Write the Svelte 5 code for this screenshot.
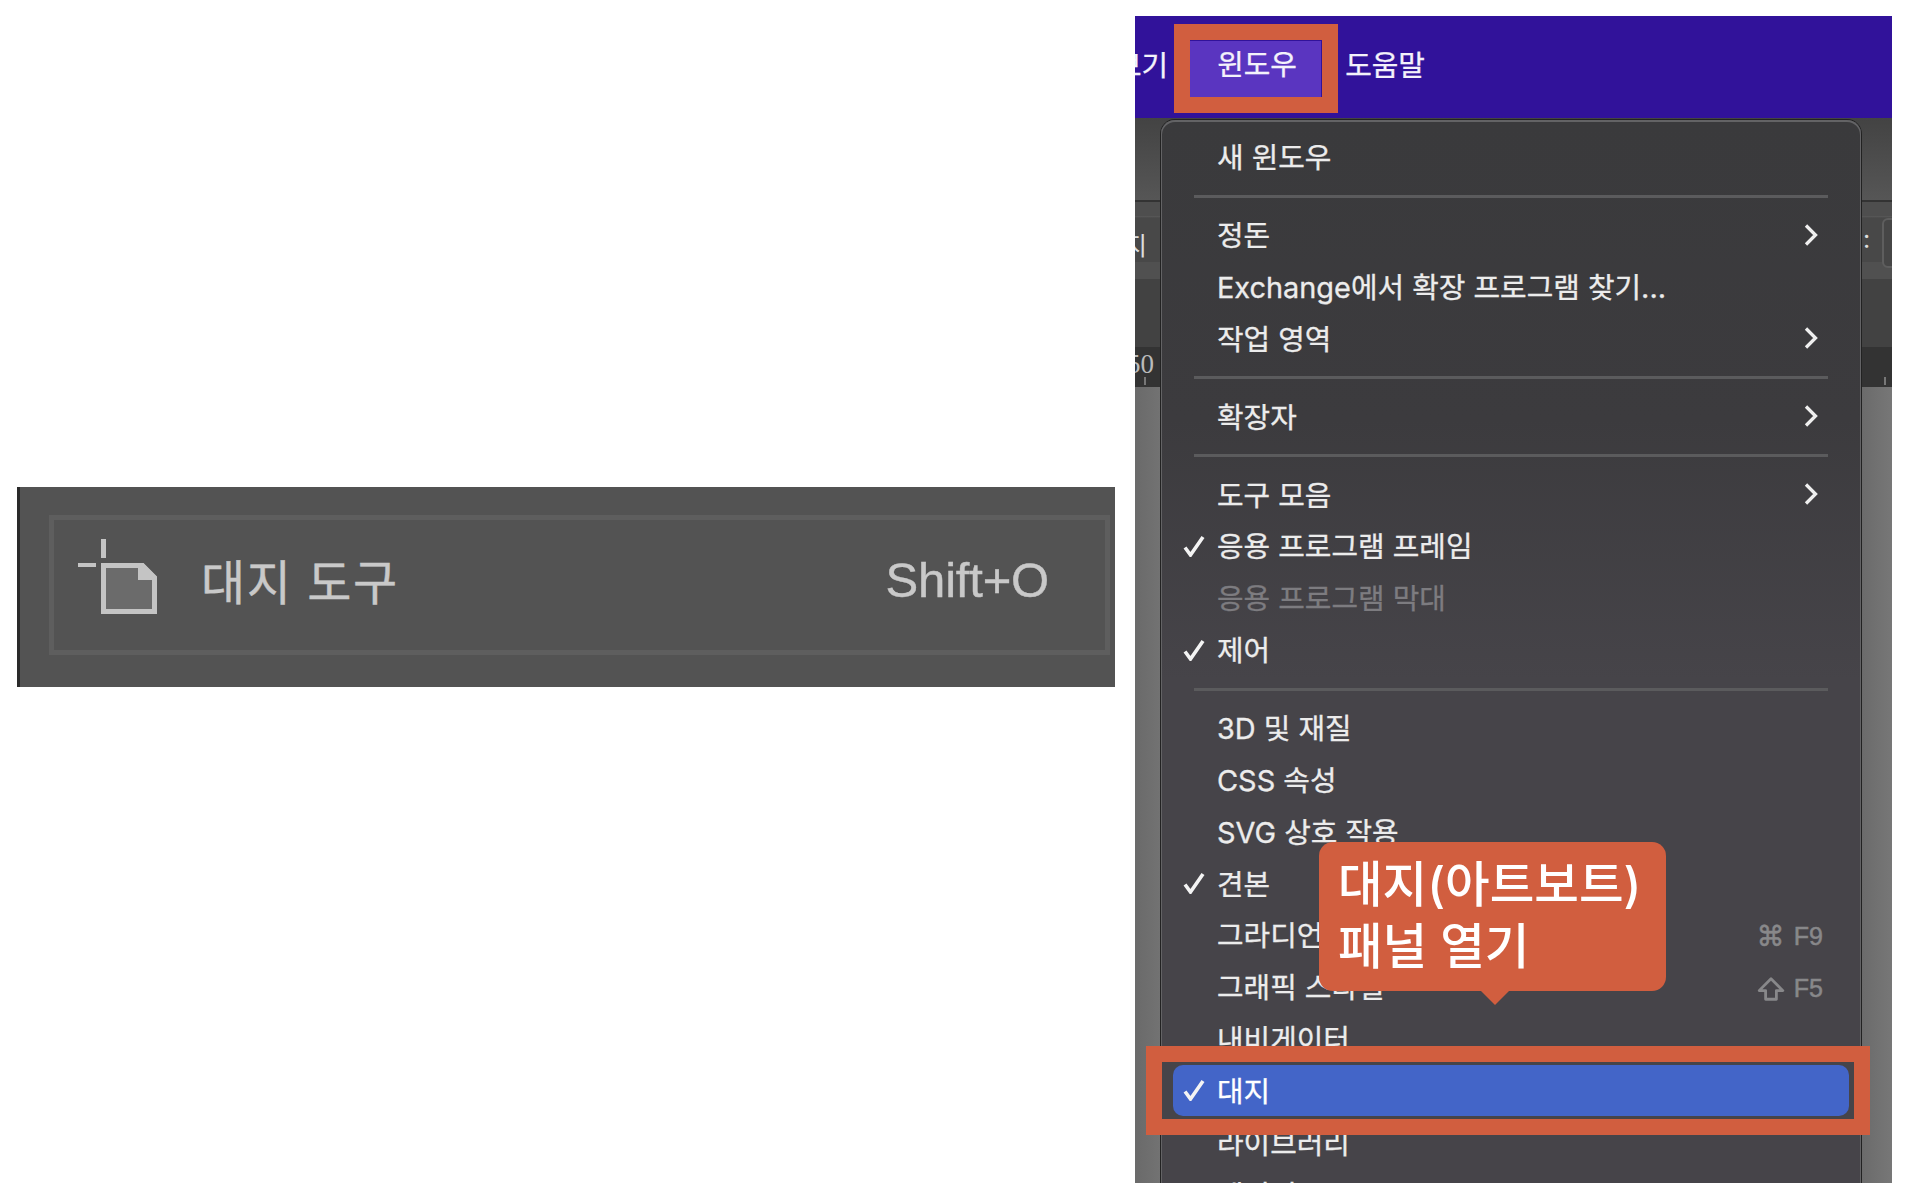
<script>
  const menu = [
    { label: "새 윈도우" },
    { sep: true },
    { label: "정돈", sub: true },
    { label: "Exchange에서 확장 프로그램 찾기..." },
    { label: "작업 영역", sub: true },
    { sep: true },
    { label: "확장자", sub: true },
    { sep: true },
    { label: "도구 모음", sub: true },
    { label: "응용 프로그램 프레임", checked: true },
    { label: "응용 프로그램 막대", disabled: true },
    { label: "제어", checked: true },
    { sep: true },
    { label: "3D 및 재질" },
    { label: "CSS 속성" },
    { label: "SVG 상호 작용" },
    { label: "견본", checked: true },
    { label: "그라디언트", key: "F9", mod: "cmd" },
    { label: "그래픽 스타일", key: "F5", mod: "shift" },
    { label: "내비게이터" },
    { label: "대지", checked: true, active: true },
    { label: "라이브러리" },
    { label: "레이어" },
  ];
</script>

<div class="page">
  <section class="tool-panel">
    <div class="tool-row">
      <svg class="tool-icon" width="80" height="76" viewBox="0 0 80 76">
        <rect x="23" y="0" width="5" height="19" fill="#c4c4c4" />
        <rect x="0" y="24" width="18" height="4" fill="#c4c4c4" />
        <path d="M25.5 26.5H64.5L76.5 38.5V72.5H25.5Z" fill="#6b6b6b" stroke="#c4c4c4" stroke-width="5" />
        <path d="M60 24H65L79 38V41H60Z" fill="#c4c4c4" />
      </svg>
      <span class="tool-name">대지 도구</span>
      <span class="tool-key">Shift+O</span>
    </div>
  </section>

  <section class="app">
    <nav class="menubar">
      <span class="top-item clipped">보기</span>
      <span class="top-item open">윈도우</span>
      <span class="top-item">도움말</span>
    </nav>

    <div class="workspace">
      <div class="band head"></div>
      <div class="band options">
        <span class="opt-left">지</span>
        <span class="opt-colon">:</span>
        <span class="opt-field"></span>
      </div>
      <div class="band doc"></div>
      <div class="band ruler">
        <span class="ruler-num">50</span>
        <i class="tick left"></i>
        <i class="tick right"></i>
      </div>
      <div class="band canvas"></div>
    </div>

    <div class="menu">
      {#each menu as item}
        {#if item.sep}
          <div class="sep"></div>
        {:else}
          <div class="row" class:active={item.active} class:disabled={item.disabled}>
            <span class="check">
              {#if item.checked}
                <svg width="22" height="22" viewBox="0 0 22 22">
                  <path d="M2 12.5L7.5 20L20 2" fill="none" stroke="#f4f4f4" stroke-width="3.6" />
                </svg>
              {/if}
            </span>
            <span class="label">{item.label}</span>
            {#if item.sub}
              <svg class="chevron" width="14" height="22" viewBox="0 0 14 22">
                <path d="M2 1.5L11.5 11L2 20.5" fill="none" stroke="#efefef" stroke-width="3.3" />
              </svg>
            {/if}
            {#if item.key}
              <span class="shortcut">
                {#if item.mod === "cmd"}
                  <span class="cmd">⌘</span>
                {:else}
                  <svg width="28" height="24" viewBox="0 0 26 22">
                    <path d="M13 1.5L24 12.5H18V20.5H8V12.5H2Z" fill="none" stroke="#88888a" stroke-width="2.6" stroke-linejoin="round" />
                  </svg>
                {/if}
                <span>{item.key}</span>
              </span>
            {/if}
          </div>
        {/if}
      {/each}
    </div>

    <div class="mark mark-top"></div>
    <div class="mark mark-row"></div>
    <div class="callout">대지(아트보트)<br />패널 열기</div>
  </section>
</div>

<style>
  :global(body) {
    margin: 0;
    background: #fff;
  }

  .page {
    display: flex;
    align-items: flex-start;
    width: 1906px;
    height: 1200px;
    overflow: hidden;
    font-family: "Inter", "Noto Sans CJK KR", sans-serif;
  }

  .tool-panel {
    box-sizing: border-box;
    width: 1098px;
    height: 200px;
    margin: 487px 0 0 17px;
    padding: 28px 5px 32px 29px;
    background: #535353;
    border-left: 3px solid #2a2a2a;
  }

  .tool-row {
    box-sizing: border-box;
    display: flex;
    align-items: center;
    height: 140px;
    padding: 0 56px 0 26px;
    border: 5px solid #5e5e5e;
    color: #c9c9c9;
    -webkit-text-stroke: 0.4px currentColor;
  }

  .tool-icon {
    flex: none;
    margin: -16px 0 0 -2px;
  }

  .tool-name {
    flex: 1;
    margin-left: 43px;
    padding-bottom: 12px;
    font-size: 48px;
    letter-spacing: 1.5px;
  }

  .tool-key {
    padding-bottom: 10px;
    font-family: "Liberation Sans", sans-serif;
    font-size: 49px;
    letter-spacing: -0.2px;
  }

  .app {
    position: relative;
    flex: none;
    width: 757px;
    height: 1167px;
    margin: 16px 0 0 20px;
    overflow: hidden;
    background: #6e6e6e;
  }

  .menubar {
    display: flex;
    align-items: center;
    height: 102px;
    background: #31129a;
    color: #f4f2fb;
    font-size: 28.9px;
    -webkit-text-stroke: 0.3px currentColor;
  }

  .top-item {
    flex: none;
    padding-bottom: 8px;
  }

  .top-item.clipped {
    margin-left: -20px;
    margin-right: 22px;
  }

  .top-item.open {
    box-sizing: border-box;
    width: 131px;
    height: 56px;
    margin: 4px 24px 0 0;
    padding: 0 0 0 27px;
    line-height: 48px;
    background: #5a35c0;
  }

  .workspace {
    display: flex;
    flex-direction: column;
    height: 1065px;
    background: linear-gradient(90deg, #666 0, #747474 40px, #6a6a6a 100%);
  }

  .band {
    position: relative;
    flex: none;
  }

  .head {
    height: 82px;
    background: linear-gradient(180deg, #434343, #565656);
    border-bottom: 2px solid #333;
  }

  .options {
    height: 60px;
    background: linear-gradient(180deg, #4e4e4e 0, #4e4e4e 14px, #5a5a5a 14px, #484848 16px);
    border-bottom: 17px solid #505050;
    color: #ddd;
    font-size: 25px;
  }

  .opt-left {
    position: absolute;
    left: -11px;
    top: 24px;
  }

  .opt-colon {
    position: absolute;
    left: 728px;
    top: 22px;
  }

  .opt-field {
    position: absolute;
    left: 747px;
    top: 16px;
    width: 20px;
    height: 46px;
    border: 2px solid #5e5e5e;
    border-radius: 6px;
    background: #464646;
  }

  .doc {
    height: 68px;
    background: #424242;
  }

  .ruler {
    height: 40px;
    background: #333;
    color: #bbb;
    font-family: "Liberation Serif", serif;
    font-size: 27px;
  }

  .ruler-num {
    position: absolute;
    left: -8px;
    top: 2px;
  }

  .tick {
    position: absolute;
    bottom: 2px;
    width: 2px;
    height: 8px;
    background: #777;
  }

  .tick.left {
    left: 9px;
  }

  .tick.right {
    left: 749px;
  }

  .canvas {
    flex: 1;
    background: linear-gradient(90deg, #6a6a6a, #747474 30px, #6a6a6a 725px, #777);
  }

  .menu {
    position: absolute;
    left: 26px;
    top: 104px;
    box-sizing: border-box;
    width: 700px;
    height: 1080px;
    padding-top: 11px;
    background: linear-gradient(180deg, #3a3a3c 0, #3c3b3e 300px, #464449 560px, #464449 100%);
    border-radius: 14px 14px 0 0;
    box-shadow: 0 0 0 1px #222, inset 0 1px 0 1px #636365;
    color: #ececec;
    font-size: 28.9px;
    -webkit-text-stroke: 0.3px currentColor;
  }

  .sep {
    height: 3px;
    margin: 12px 33px 11px;
    background: #5b5b5d;
  }

  .row {
    display: flex;
    align-items: center;
    height: 51.85px;
    padding: 0 43px 0 22px;
    white-space: nowrap;
  }

  .row.disabled {
    color: #7d7c80;
  }

  .row.active {
    margin: 0 12px;
    padding: 0 31px 0 10px;
    background: #4365c8;
    border-radius: 10px;
    color: #fff;
  }

  .check {
    flex: none;
    display: flex;
    width: 34px;
    height: 22px;
  }

  .label {
    flex: 1;
    padding-bottom: 3px;
  }

  .chevron {
    flex: none;
  }

  .shortcut {
    display: flex;
    align-items: center;
    gap: 9px;
    margin: 4px -5px 0 0;
    color: #88888a;
    font-family: "Liberation Sans", sans-serif;
    font-size: 25px;
    -webkit-text-stroke: 0.5px currentColor;
  }

  .cmd {
    font-family: "DejaVu Sans", sans-serif;
    font-size: 28px;
    line-height: 1;
  }

  .mark {
    position: absolute;
    box-sizing: border-box;
    border: 16px solid #d15e3f;
  }

  .mark-top {
    left: 39px;
    top: 8px;
    width: 164px;
    height: 89px;
  }

  .mark-row {
    left: 11px;
    top: 1030px;
    width: 724px;
    height: 89px;
  }

  .callout {
    position: absolute;
    left: 184px;
    top: 826px;
    box-sizing: border-box;
    width: 347px;
    height: 149px;
    padding: 12px 0 0 19px;
    background: #d15e3f;
    border-radius: 14px;
    color: #fff;
    font-size: 48.5px;
    font-weight: 500;
    line-height: 62px;
    white-space: nowrap;
  }

  .callout::after {
    content: "";
    position: absolute;
    left: 162px;
    top: 149px;
    width: 28px;
    height: 14px;
    background: #d15e3f;
    clip-path: polygon(0 0, 100% 0, 50% 100%);
  }
</style>
